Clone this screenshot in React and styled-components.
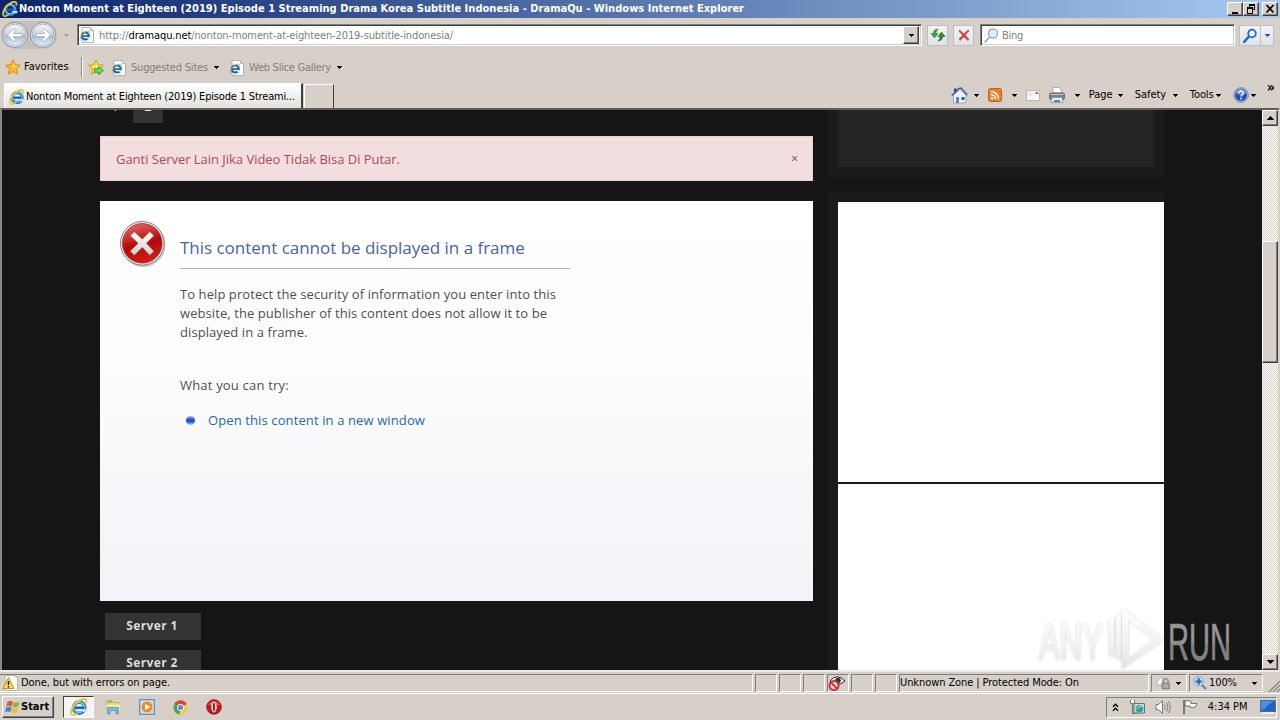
import styled, { createGlobalStyle, css } from "styled-components";

const theme = {
  chrome: "#d6d0c8",
  page: "#151515",
  panel: "#1b1b1b",
  ui: `"DejaVu Sans Condensed", Tahoma, sans-serif`,
  content: `"Open Sans", "Segoe UI", sans-serif`,
};

/* ---------- icons ---------- */

const IeIcon = ({ size = 16 }) => (
  <svg width={size} height={size} viewBox="0 0 16 16">
    <circle cx="8.2" cy="8.6" r="4.9" fill="none" stroke="#1c7ad0" strokeWidth="3.2" />
    <circle cx="8.2" cy="8.3" r="4.6" fill="none" stroke="#6fd0fa" strokeWidth="1.3" />
    <path d="M4 7.5h8.5v2.3H4z" fill="#1765b8" />
    <path d="M9.5 10h6v2.2h-4.2z" fill="#d6ddd8" />
    <path d="M2.1 15C-.9 12.4 3.3 4.7 9 1.9c3.6-1.9 6.5-1.2 5.2 2.5" fill="none" stroke="#f2c22a" strokeWidth="1.8" />
    <path d="M2.1 15c1.2.6 3-.2 4.5-1.4" fill="none" stroke="#f2c22a" strokeWidth="1.4" />
  </svg>
);

const IePageIcon = () => (
  <svg width="16" height="16" viewBox="0 0 16 16">
    <path d="M3 .5h8.5l3 3v12H3z" fill="#fff" stroke="#a9b4c4" />
    <path d="M11.5.5v3h3" fill="#e5edf5" stroke="#a9b4c4" />
    <circle cx="6.3" cy="9" r="3.5" fill="none" stroke="#1668b5" strokeWidth="2.2" />
    <path d="M3.5 8.2h6v1.7h-6z" fill="#1668b5" />
    <path d="M7.5 10.2h4v1.6H8.3z" fill="#fff" />
    <path d="M1.3 13.5C.2 11 4 5.6 7.8 4.3c2.2-.8 3.2 0 2.6 1.5" fill="none" stroke="#dcae2b" />
  </svg>
);

const NavArrow = ({ flip }) => (
  <svg width="28" height="28" viewBox="0 0 28 28">
    <defs>
      <linearGradient id="orb" x1="0" y1="0" x2="0" y2="1">
        <stop offset="0" stopColor="#f4f7fa" />
        <stop offset=".45" stopColor="#cfd8e4" />
        <stop offset=".55" stopColor="#a9bdd3" />
        <stop offset="1" stopColor="#e4f3fb" />
      </linearGradient>
    </defs>
    <circle cx="14" cy="14" r="12.5" fill="#eef1f4" stroke="#8e939b" />
    <circle cx="14" cy="14" r="10.8" fill="url(#orb)" stroke="#9fabba" strokeWidth=".8" />
    <path
      d="M6.500 14l6.500-6.500 2 2-3 3h9v3.200h-9l3 3-2 2z"
      fill="#fff"
      stroke="#8fa0b5"
      strokeWidth=".7"
      transform={flip ? "matrix(-1 0 0 1 28 0)" : undefined}
    />
  </svg>
);

const STAR = "M8 .8l2.200 4.900 5.200.6-3.900 3.600 1.100 5.200L8 12.500l-4.600 2.600 1.100-5.200L.6 6.300l5.200-.6z";

const StarIcon = ({ add }) => (
  <svg width="16" height="16" viewBox="0 0 16 16">
    <path d={STAR} fill={add ? "#fbe14a" : "#fdb822"} stroke={add ? "#c9941d" : "#d98412"} strokeWidth=".9" />
    <path d="M8 2.5l1.5 4.2 3.5.4-5 2z" fill="#ffe892" />
    {add && <path d="M6.500 9.800h4V7.500l5 4-5 4v-2.300h-4z" fill="#7ddc4c" stroke="#21962c" strokeWidth=".9" />}
  </svg>
);

const Triangle = ({ color = "#000" }) => (
  <svg width="6" height="3" viewBox="0 0 6 3" shapeRendering="crispEdges">
    <path d="M0 0h6L3 3z" fill={color} />
  </svg>
);

const RefreshIcon = () => (
  <svg width="16" height="14" viewBox="0 0 16 14">
    <path d="M1 5.5L4.5 10 8 5.5H5.900Q6 2.500 8 1 3.400 1.300 3.200 5.500z" fill="#43a53a" stroke="#237c27" strokeWidth=".6" />
    <path d="M15 8.500L11.500 4 8 8.500h2.100Q10 11.500 8 13q4.600-.3 4.800-4.500z" fill="#348b31" stroke="#1c6a22" strokeWidth=".6" />
  </svg>
);

const StopIcon = () => (
  <svg width="12" height="12" viewBox="0 0 12 12">
    <path d="M1.500 1Q5 4 6 5.200 8 2.500 10.500 1L11 2Q8.500 4 7.200 6.200L11 10.500 9.600 11.300 6 7.800 2.200 11.300 1 10 4.800 6.200 1 2.200z" fill="#d74343" stroke="#b02e2e" strokeWidth=".5" />
  </svg>
);

const Magnifier = ({ color, light }) => (
  <svg width="15" height="15" viewBox="0 0 15 15">
    <path d="M1 14l5-5.500" stroke={color} strokeWidth={light ? 1.6 : 2.6} strokeLinecap="round" />
    <circle cx="9" cy="5.5" r={light ? 4.6 : 3.8} fill={light ? "#dcebf6" : "#eaf2fc"} stroke={color} strokeWidth={light ? 1.2 : 1.8} />
  </svg>
);

const HomeIcon = () => (
  <svg width="17" height="17" viewBox="0 0 17 17">
    <path d="M2.500 8v7.500l6 1L15 15V8L9 2.500z" fill="#eef3f8" stroke="#8a9cb4" strokeWidth=".8" />
    <path d="M3 1.500h2.500V4L3 6z" fill="#2d3f9b" />
    <path d="M.8 8.500L8 1.500l2-.5 6.300 7" fill="none" stroke="#4058a8" strokeWidth="1.4" />
    <path d="M5 10h3v6H5z" fill="#5d87b8" />
    <path d="M10.500 10h3v3h-3z" fill="#1c5f9e" />
  </svg>
);

const RssIcon = () => (
  <svg width="14" height="14" viewBox="0 0 14 14">
    <rect x=".5" y=".5" width="13" height="13" rx="2" fill="#ee7e28" stroke="#c85a18" />
    <circle cx="4" cy="10.2" r="1.3" fill="#fff" />
    <path d="M2.800 6.500c2.700 0 4.700 2 4.700 4.800M2.800 3.400c4.500 0 7.800 3.400 7.800 7.900" fill="none" stroke="#fff" strokeWidth="1.5" />
  </svg>
);

const MailIcon = () => (
  <svg width="14" height="11" viewBox="0 0 14 11">
    <rect x=".5" y=".5" width="13" height="10" fill="#f7f7f8" stroke="#b9b6b6" />
    <path d="M2 3h5M2 5h4" stroke="#d3d6dc" />
    <path d="M9.500 2h2.500v2H9.500z" fill="#d84a4a" />
  </svg>
);

const PrinterIcon = () => (
  <svg width="16" height="16" viewBox="0 0 16 16">
    <path d="M4 6V.5h6L12.500 3v3z" fill="#fff" stroke="#9aa1aa" strokeWidth=".8" />
    <rect x=".5" y="6" width="15" height="6.5" rx="1.5" fill="#7d8085" stroke="#5c5f64" strokeWidth=".8" />
    <path d="M1.500 7.500h13" stroke="#c5c8cc" />
    <path d="M3 10.500h10l.8 5H2.200z" fill="#e4eef7" stroke="#8b929b" strokeWidth=".8" />
    <path d="M5 13h6v2H5z" fill="#3e8fc7" />
  </svg>
);

const HelpIcon = () => (
  <svg width="16" height="16" viewBox="0 0 16 16">
    <circle cx="8" cy="8" r="7.4" fill="#a9b9d8" stroke="#7386b0" strokeWidth=".8" />
    <circle cx="8" cy="8" r="6" fill="#2450b4" />
    <path d="M2.500 6.500a5.500 5 0 0 1 11 0q-5.500 2.500-11 0z" fill="#5f86d8" />
    <path d="M5.800 6.200C5.800 3.200 10.300 3.300 10.300 6c0 1.700-2.200 1.700-2.200 3.500M8.100 10.800v1.700" fill="none" stroke="#fff" strokeWidth="1.5" />
  </svg>
);

const ErrorBadge = () => (
  <svg width="48" height="48" viewBox="0 0 48 48">
    <defs>
      <linearGradient id="red" x1="0" y1="0" x2=".3" y2="1">
        <stop offset="0" stopColor="#e27a74" />
        <stop offset=".45" stopColor="#c8211f" />
        <stop offset=".6" stopColor="#b50808" />
        <stop offset="1" stopColor="#d11a14" />
      </linearGradient>
      <linearGradient id="cross" x1="0" y1="0" x2="0" y2="1">
        <stop offset="0" stopColor="#fff" />
        <stop offset="1" stopColor="#cfcfcf" />
      </linearGradient>
    </defs>
    <circle cx="23.300" cy="23.800" r="22.300" fill="#b8c0c0" opacity=".8" />
    <circle cx="22.300" cy="22.300" r="21.800" fill="#f7f3f2" stroke="#8b7676" />
    <circle cx="22.300" cy="22.300" r="19.800" fill="url(#red)" stroke="#9c2824" strokeWidth=".8" />
    <path
      d="M14.300 10.500l8 7.600 7.500-7.600 4.300 4.200-7.600 7.600 7.600 8-4.300 4.200-7.500-7.900-8 7.900-4.300-4.200 8-8-8-7.600z"
      fill="url(#cross)"
      stroke="#a32320"
      strokeWidth=".6"
    />
  </svg>
);

const WarningIcon = () => (
  <svg width="16" height="16" viewBox="0 0 16 16">
    <path d="M3 .5h9l3.500 3v12H3z" fill="#fff" stroke="#b8b4ac" />
    <path d="M6.500 2.500L12 13.500H1z" fill="#ffe32e" stroke="#b59a13" strokeLinejoin="round" />
    <path d="M6.500 6v4M6.500 11v1.500" stroke="#111" strokeWidth="1.5" />
  </svg>
);

const PrivacyIcon = () => (
  <svg width="18" height="16" viewBox="0 0 18 16">
    <path d="M2 6Q9-2.500 17 6q-8 7-15 0z" fill="#fff" stroke="#222" />
    <circle cx="10" cy="5.500" r="2.800" fill="#333" />
    <circle cx="6" cy="10.500" r="4.500" fill="#fbe3e1" stroke="#cf3030" strokeWidth="2" />
    <path d="M3 7.500l6 6" stroke="#cf3030" strokeWidth="2" />
  </svg>
);

const ZoneLockIcon = () => (
  <svg width="16" height="14" viewBox="0 0 16 14">
    <path d="M1 9Q3 2 8 1l-1 8z" fill="#f4f4f4" stroke="#aaa" strokeWidth=".8" />
    <path d="M8.500 7V5a2.300 2.300 0 0 1 4.600 0v2" fill="none" stroke="#8a8a8a" strokeWidth="1.3" />
    <rect x="7" y="7" width="7.500" height="6" fill="#8f8f8f" stroke="#747474" strokeWidth=".6" />
    <path d="M8 9h5.500M8 11h5.500" stroke="#ddd" strokeWidth=".8" />
  </svg>
);

const ZoomIcon = () => (
  <svg width="14" height="14" viewBox="0 0 14 14">
    <path d="M8.500 8.500l4 4" stroke="#7b7f86" strokeWidth="2" strokeLinecap="round" />
    <circle cx="5.700" cy="5.500" r="4.700" fill="#cfe4f8" stroke="#6fa6dc" />
    <path d="M5.700 2.300v6.400M2.500 5.500h6.400" stroke="#1b60c0" strokeWidth="2" />
  </svg>
);

const StartFlag = () => (
  <svg width="15" height="14" viewBox="0 0 15 14">
    <path d="M2.500 1.800Q5 .2 8 1.500L6.800 6.300Q4 5.200 1.300 6.600z" fill="#e4572b" />
    <path d="M8.800 1.900q3 1.300 5.700-.2L13.200 6.400q-2.800 1.400-5.600.2z" fill="#7dbb42" />
    <path d="M1.100 7.500Q4 6.100 6.600 7.200l-1.300 4.900Q2.800 11 0 12.400z" fill="#3f86d6" />
    <path d="M7.400 7.600q2.800 1.100 5.600-.2l-1.300 4.900q-2.800 1.400-5.600.1z" fill="#f6bd2b" />
  </svg>
);

const FolderIcon = () => (
  <svg width="16" height="16" viewBox="0 0 16 16">
    <path d="M1.500 2h5l1 1.500H14V12H1.500z" fill="#f1d676" stroke="#c9a646" strokeWidth=".8" />
    <path d="M3 1h4v3H3z" fill="#8bc46a" />
    <path d="M1.500 5.500H15v7H1.500z" fill="#f9e9a6" />
    <path d="M2.500 8.500h11V15h-2.600v-3.500H5.200V15H2.500z" fill="#77bde4" stroke="#4290c0" strokeWidth=".7" />
  </svg>
);

const MediaIcon = () => (
  <svg width="16" height="16" viewBox="0 0 16 16">
    <rect x=".6" y=".6" width="14.8" height="14.8" fill="#c4dcf1" stroke="#5a93cb" strokeWidth="1.2" />
    <circle cx="8" cy="8" r="5.800" fill="#f2891c" stroke="#fbd39c" strokeWidth=".8" />
    <path d="M6 4.800L11.500 8 6 11.200z" fill="#fff" />
  </svg>
);

const ChromeIcon = () => (
  <svg width="15" height="15" viewBox="0 0 15 15">
    <circle cx="7.500" cy="7.500" r="7" fill="#f5cd3c" />
    <path d="M7.500 7.500L1.400 4A7 7 0 0 1 13.700 4z" fill="#dc4437" />
    <path d="M7.500 7.500L1.400 4a7 7 0 0 0 5.100 10.400z" fill="#3fa757" />
    <circle cx="7.500" cy="7.500" r="3.400" fill="#f4f4f4" />
    <circle cx="7.500" cy="7.500" r="2.500" fill="#4a8af0" />
  </svg>
);

const OperaIcon = () => (
  <svg width="16" height="16" viewBox="0 0 16 16">
    <circle cx="8" cy="8" r="7.300" fill="#c31a1f" stroke="#8c1216" strokeWidth=".8" />
    <path d="M2.200 6a6 5 0 0 1 11.600 0z" fill="#de5654" />
    <ellipse cx="8" cy="8" rx="2.700" ry="5.400" fill="#f7eeee" />
    <ellipse cx="8" cy="8" rx="1.100" ry="4.400" fill="#b01519" />
  </svg>
);

const NetworkIcon = () => (
  <svg width="16" height="16" viewBox="0 0 16 16">
    <path d="M5 4.500h10.500V14H5z" fill="#c3dcdc" stroke="#67777c" />
    <circle cx="10.500" cy="9.800" r="3.800" fill="#3aa39c" />
    <path d="M7.500 10q3-4 6-2.500" fill="none" stroke="#b8e6dc" />
    <path d="M1.500 1v3.500h4V1" fill="#fff" stroke="#777" />
    <path d="M3.500 5v9.500h5" fill="none" stroke="#777" strokeWidth="1.2" />
  </svg>
);

const SpeakerIcon = () => (
  <svg width="16" height="16" viewBox="0 0 16 16">
    <path d="M1 5.500h2.500L7.500 1.500v13l-4-4H1z" fill="#f8f8f8" stroke="#77787a" />
    <path d="M9.500 5.500q1.500 2.500 0 5M11.500 3.500q3 4.500 0 9M13.500 2q3.500 6 0 12" fill="none" stroke="#808285" />
  </svg>
);

const FlagIcon = () => (
  <svg width="16" height="16" viewBox="0 0 16 16">
    <path d="M2 1v14.500" stroke="#707275" strokeWidth="1.8" />
    <path d="M3 2q3.500-1 6 .5v2h6l-1.500 3.300q-3 1.700-5.500.2V7H3z" fill="#fafafa" stroke="#707275" />
  </svg>
);

const DesktopIcon = () => (
  <svg width="16" height="14" viewBox="0 0 16 14">
    <rect x=".5" y=".5" width="15" height="11" fill="#2163c4" stroke="#4c6a98" />
    <path d="M1 1h14Q9 3 6 7T1 10z" fill="#4a8fe2" />
    <path d="M2 13h12" stroke="#f6f6f6" strokeWidth="1.5" />
  </svg>
);

const Watermark = () => (
  <WatermarkStyled width="214" height="70" viewBox="0 0 214 70">
    <defs>
      <filter id="halo" x="-10%" y="-10%" width="120%" height="120%">
        <feDropShadow dx="0" dy="0" stdDeviation="1.800" floodColor="#000" floodOpacity=".2" />
      </filter>
      <linearGradient id="fade" x1="0" y1="0" x2="0" y2="1">
        <stop offset="0" stopColor="#fff" stopOpacity=".95" />
        <stop offset=".5" stopColor="#f3f3f3" stopOpacity=".95" />
        <stop offset="1" stopColor="#e4e4e4" stopOpacity=".95" />
      </linearGradient>
      <linearGradient id="run" x1="0" y1="0" x2="0" y2="1">
        <stop offset=".5" stopColor="#979797" />
        <stop offset=".55" stopColor="#808080" />
      </linearGradient>
    </defs>
    <g filter="url(#halo)" fill="url(#fade)">
      <text x="4" y="54" fontSize="52" textLength="64" lengthAdjust="spacingAndGlyphs">ANY</text>
      <path
        d="M74 15l5-2v38l-5-2zM81 10l5-2v46l-5-2zM87 3L127 32V36L87 63zM93 14V53L119 34z"
        fillRule="evenodd"
      />
    </g>
    <text x="133" y="54" fontSize="52" textLength="63" lengthAdjust="spacingAndGlyphs" fill="url(#run)" stroke="#8a8a8a" strokeWidth=".7">RUN</text>
  </WatermarkStyled>
);

/* ---------- window ---------- */

const WINDOW_TITLE =
  "Nonton Moment at Eighteen (2019) Episode 1 Streaming Drama Korea Subtitle Indonesia - DramaQu - Windows Internet Explorer";
const MENUS = [
  { label: "Page", width: 46 },
  { label: "Safety", width: 55 },
  { label: "Tools", width: 43 },
];
const SERVERS = ["Server 1", "Server 2"];

function TitleBar() {
  return (
    <TitleBarStyled>
      <IeIcon />
      <Title>{WINDOW_TITLE}</Title>
      <WindowButton>
        <svg width="12" height="10" shapeRendering="crispEdges"><path d="M3 8h6v2H3z" /></svg>
      </WindowButton>
      <WindowButton>
        <svg width="12" height="10" shapeRendering="crispEdges">
          <path d="M4 0h6v2H4zM9 2h1v4H8V5h1zM4 2h1v1H4zM2 3h6v2H2zM2 5h1v4h5v1H2zM7 5h1v5H7z" />
        </svg>
      </WindowButton>
      <WindowButton $gap>
        <svg width="12" height="10"><path d="M2.500 1l7 7.500M9.500 1l-7 7.500" stroke="#000" strokeWidth="1.7" /></svg>
      </WindowButton>
    </TitleBarStyled>
  );
}

function NavBar() {
  return (
    <NavBarStyled>
      <Orbs>
        <NavArrow />
        <NavArrow flip />
      </Orbs>
      <HistoryArrow><Triangle color="#aaa59e" /></HistoryArrow>
      <AddressBox>
        <IePageIcon />
        <Url>http://<b>dramaqu.net</b>/nonton-moment-at-eighteen-2019-subtitle-indonesia/</Url>
        <ComboButton><Triangle /></ComboButton>
      </AddressBox>
      <ToolButton><RefreshIcon /></ToolButton>
      <ToolButton><StopIcon /></ToolButton>
      <SearchBox>
        <Magnifier color="#8fa3b8" light />
        <Muted $spacing={-0.3}>Bing</Muted>
      </SearchBox>
      <SearchButton>
        <span><Magnifier color="#2864cf" /></span>
        <span><Triangle color="#1d56b8" /></span>
      </SearchButton>
    </NavBarStyled>
  );
}

function FavoritesBar() {
  return (
    <FavoritesBarStyled>
      <StarIcon />
      <FavoritesLabel>Favorites</FavoritesLabel>
      <StarIcon add />
      <FavoriteLink $width={118}>
        <IePageIcon />
        <Muted $spacing={-0.2}>Suggested Sites</Muted>
        <Triangle />
      </FavoriteLink>
      <FavoriteLink $width={123}>
        <IePageIcon />
        <Muted $spacing={-0.26}>Web Slice Gallery</Muted>
        <Triangle />
      </FavoriteLink>
    </FavoritesBarStyled>
  );
}

function CommandBar() {
  return (
    <CommandBarStyled>
      <Command $width={37}><HomeIcon /><Triangle /></Command>
      <Command $width={38}><RssIcon /><Triangle /></Command>
      <Command $width={23} $pad={0}><MailIcon /></Command>
      <Command $width={40}><PrinterIcon /><Triangle /></Command>
      {MENUS.map(({ label, width }) => (
        <Command key={label} $width={width} $pad={12}>
          {label}
          <Triangle />
        </Command>
      ))}
      <Command $width={34} $pad={11}><HelpIcon /><Triangle /></Command>
      <More>»</More>
    </CommandBarStyled>
  );
}

function Page() {
  return (
    <Viewport>
      <MainColumn>
        <Pager>
          <PageNumber>1</PageNumber>
          <PageNumber $current>2</PageNumber>
        </Pager>
        <Alert>
          Ganti Server Lain Jika Video Tidak Bisa Di Putar.
          <Close>×</Close>
        </Alert>
        <Frame>
          <ErrorBadge />
          <FrameBody>
            <Heading>This content cannot be displayed in a frame</Heading>
            <Paragraph>
              To help protect the security of information you enter into this<br />
              website, the publisher of this content does not allow it to be<br />
              displayed in a frame.
            </Paragraph>
            <Try>What you can try:</Try>
            <OpenLink>Open this content in a new window</OpenLink>
          </FrameBody>
        </Frame>
        <Servers>
          {SERVERS.map((name) => (
            <ServerButton key={name}>{name}</ServerButton>
          ))}
        </Servers>
      </MainColumn>
      <Sidebar>
        <Widget><WidgetInner /></Widget>
        <AdPanel><Ad /><Ad /></AdPanel>
      </Sidebar>
      <ScrollBar>
        <ScrollButton><svg width="7" height="4" shapeRendering="crispEdges"><path d="M0 4h7L3.500 0z" /></svg></ScrollButton>
        <ScrollThumb />
        <ScrollButton><svg width="7" height="4" shapeRendering="crispEdges"><path d="M0 0h7L3.500 4z" /></svg></ScrollButton>
      </ScrollBar>
    </Viewport>
  );
}

function StatusBar() {
  return (
    <StatusBarStyled>
      <StatusCell $first><WarningIcon />Done, but with errors on page.</StatusCell>
      <StatusCell />
      <StatusCell />
      <StatusCell />
      <StatusCell><PrivacyIcon /></StatusCell>
      <StatusCell />
      <StatusCell />
      <StatusCell>Unknown Zone | Protected Mode: On</StatusCell>
      <StatusCell $icons><ZoneLockIcon /><Triangle /></StatusCell>
      <StatusCell $icons><ZoomIcon /><Percent>100%</Percent><Triangle /></StatusCell>
      <Grip width="12" height="12" viewBox="0 0 12 12">
        <path d="M12 1L1 12M12 5L5 12M12 9l-3 3" stroke="#8d8982" strokeWidth="1.3" />
      </Grip>
    </StatusBarStyled>
  );
}

function TaskBar() {
  return (
    <TaskBarStyled>
      <StartButton><StartFlag />Start</StartButton>
      <ActiveTask><IeIcon size={18} /></ActiveTask>
      <QuickLaunch>
        <FolderIcon />
        <MediaIcon />
        <ChromeIcon />
        <OperaIcon />
      </QuickLaunch>
      <Tray>
        <svg width="7" height="9" viewBox="0 0 7 9"><path d="M1 3.800l2.500-2.500L6 3.800M1 7.800l2.500-2.500L6 7.800" fill="none" stroke="#000" strokeWidth="1.4" /></svg>
        <NetworkIcon />
        <SpeakerIcon />
        <FlagIcon />
        <span>4:34 PM</span>
        <DesktopIcon />
      </Tray>
    </TaskBarStyled>
  );
}

export default function App() {
  return (
    <WindowStyled>
      <GlobalStyle />
      <TitleBar />
      <NavBar />
      <FavoritesBar />
      <TabRow>
        <Tab><IeIcon /><span>Nonton Moment at Eighteen (2019) Episode 1 Streami...</span></Tab>
        <NewTab />
        <CommandBar />
      </TabRow>
      <Page />
      <StatusBar />
      <TaskBar />
      <Watermark />
    </WindowStyled>
  );
}

/* ---------- styles ---------- */

const GlobalStyle = createGlobalStyle`
  * { box-sizing: border-box; }
  body { margin: 0; overflow: hidden; }
  svg { display: block; flex: none; }
`;

const raised = css`
  background: ${theme.chrome};
  border: 1px solid;
  border-color: #fff #404040 #404040 #fff;
  box-shadow: inset -1px -1px 0 #808080;
`;

const sunken = css`
  border: 1px solid;
  border-color: #808080 #fff #fff #808080;
`;

const WindowStyled = styled.div`
  position: relative;
  display: flex;
  flex-direction: column;
  width: 1280px;
  height: 720px;
  background: ${theme.chrome};
  font: 11px/14px ${theme.ui};
  color: #000;
  white-space: nowrap;
`;

const TitleBarStyled = styled.header`
  display: flex;
  align-items: center;
  height: 18px;
  flex: none;
  padding: 0 2px;
  background: linear-gradient(90deg, #0a246a, #a6caf0);
`;

const Title = styled.h1`
  flex: 1;
  margin: 0 0 0 1px;
  font-size: 11px;
  line-height: 20px;
  letter-spacing: 0.027px;
  color: #fff;
`;

const WindowButton = styled.div`
  ${raised}
  width: 16px;
  height: 14px;
  padding: 1px;
  ${({ $gap }) => $gap && "margin-left: 3px;"}
`;

const NavBarStyled = styled.nav`
  display: flex;
  align-items: center;
  height: 34px;
  flex: none;
`;

const Orbs = styled.div`
  display: flex;
  margin-left: 1px;
  border-radius: 14px;
  background: #c3c0bf;
`;

const HistoryArrow = styled.div`
  width: 20px;
  padding-left: 6px;
`;

const fieldBox = css`
  display: flex;
  align-items: center;
  height: 22px;
  background: #fff;
  border: 1px solid;
  border-color: #808080 #fff #fff #808080;
  box-shadow: inset 1px 1px 0 #404040, inset -1px -1px 0 #d4d0c8;
`;

const AddressBox = styled.div`
  ${fieldBox}
  width: 845px;
  padding: 0 2px 0 1px;
`;

const Url = styled.span`
  flex: 1;
  margin: 2px 0 0 4px;
  letter-spacing: -0.123px;
  color: #808080;
  b {
    font-weight: 400;
    color: #000;
  }
`;

const ComboButton = styled.div`
  ${raised}
  display: grid;
  place-items: center;
  width: 16px;
  height: 18px;
`;

const softButton = css`
  border: 1px solid #b9bfc9;
  background: linear-gradient(#f1f2f4, #dfe3e8);
`;

const ToolButton = styled.div`
  ${softButton}
  display: grid;
  place-items: center;
  width: 21px;
  height: 21px;
  margin-left: 5px;
`;

const SearchBox = styled.div`
  ${fieldBox}
  width: 255px;
  margin-left: 6px;
  padding-left: 3px;
  gap: 3px;
  span {
    margin-top: 2px;
  }
`;

const Muted = styled.span`
  letter-spacing: ${({ $spacing }) => $spacing}px;
  color: #808080;
`;

const SearchButton = styled.div`
  ${softButton}
  display: grid;
  grid-template-columns: 20px 13px;
  height: 21px;
  margin-left: 4px;
  span {
    display: grid;
    place-items: center;
  }
  span + span {
    border-left: 1px solid #b9bfc9;
  }
`;

const FavoritesBarStyled = styled.div`
  display: flex;
  align-items: center;
  height: 30px;
  flex: none;
  padding: 0 0 1px 5px;
`;

const FavoritesLabel = styled.span`
  width: 62px;
  height: 20px;
  margin-right: 5px;
  padding-left: 3px;
  line-height: 19px;
  border-right: 1px solid #fff;
  box-shadow: -1px 0 0 #8f8b85 inset;
`;

const FavoriteLink = styled.div`
  display: flex;
  align-items: center;
  width: ${({ $width }) => $width}px;
  padding: 2px 0 0 7px;
  span {
    margin: 0 5px 0 4px;
  }
`;

const TabRow = styled.div`
  display: flex;
  height: 26px;
  flex: none;
  padding-left: 4px;
`;

const Tab = styled.div`
  display: flex;
  align-items: center;
  width: 299px;
  margin-top: 1px;
  padding: 1px 0 0 4px;
  border: 1px solid #fff;
  border-right: 2px solid #404040;
  border-bottom: 0;
  background: linear-gradient(#fff, #e4e1dc);
  span {
    margin-left: 1px;
    letter-spacing: -0.175px;
  }
`;

const NewTab = styled.div`
  width: 30px;
  margin: 2px 0 0 1px;
  border: 1px solid #fff;
  border-right: 1px solid #404040;
  border-bottom: 0;
`;

const CommandBarStyled = styled.div`
  display: flex;
  align-items: center;
  margin-left: auto;
  padding-right: 5px;
`;

const Command = styled.div`
  display: flex;
  align-items: center;
  justify-content: space-between;
  width: ${({ $width }) => $width}px;
  height: 24px;
  padding-right: ${({ $pad = 9 }) => $pad}px;
  letter-spacing: -0.1px;
`;

const More = styled.span`
  align-self: flex-start;
  font-size: 14px;
  font-weight: 700;
  line-height: 10px;
`;

const Viewport = styled.main`
  display: flex;
  height: 562px;
  flex: none;
  border-top: 2px solid #5f5e5b;
  border-left: 2px solid #8b8883;
  border-right: 2px solid ${theme.chrome};
  background: ${theme.page};
  overflow: hidden;
`;

const MainColumn = styled.section`
  display: flex;
  flex-direction: column;
  width: 713px;
  margin-left: 98px;
  font: 13px/19px ${theme.content};
`;

/* scrolled almost out of view, only the bottom edge shows */
const Pager = styled.div`
  display: flex;
  align-items: flex-end;
  height: 13px;
  flex: none;
  gap: 3px;
  overflow: hidden;
`;

const PageNumber = styled.span`
  flex: none;
  width: 30px;
  height: 27px;
  padding-bottom: 10px;
  line-height: 20px;
  text-align: center;
  color: #eee;
  ${({ $current }) => $current && "background: #333;"}
`;

const Alert = styled.div`
  display: flex;
  justify-content: space-between;
  flex: none;
  height: 45px;
  margin-top: 13px;
  padding: 0 14px 0 15px;
  line-height: 44px;
  letter-spacing: -0.026px;
  border: 1px solid #ebccd1;
  background: #f2dede;
  color: #b04a50;
`;

const Close = styled.span`
  font-size: 12px;
  color: #7c3c40;
`;

const Frame = styled.article`
  display: flex;
  flex: none;
  height: 400px;
  margin-top: 20px;
  padding: 20px;
  gap: 12px;
  background: linear-gradient(#fff 0%, #fcfcfd 45%, #f2f3f8 100%);
  color: #4f4f4f;
`;

const FrameBody = styled.div`
  width: 390px;
  padding-top: 14px;
`;

const Heading = styled.h2`
  height: 34px;
  margin: 0;
  font-size: 17px;
  font-weight: 400;
  line-height: 26px;
  letter-spacing: -0.02px;
  border-bottom: 1px solid #b6b6b6;
  color: #4465a2;
`;

const Paragraph = styled.p`
  margin: 16px 0 0;
  letter-spacing: 0.078px;
`;

const Try = styled.p`
  margin: 34px 0 16px;
  letter-spacing: 0.19px;
`;

const OpenLink = styled.a`
  display: flex;
  align-items: center;
  padding-left: 6px;
  gap: 13px;
  letter-spacing: 0.114px;
  color: #1a6ca3;
  &::before {
    content: "";
    width: 9px;
    height: 9px;
    border-radius: 50%;
    background: linear-gradient(#a9bdf0, #1a3fbf 45%, #2f6fd8 70%, #9adcf8);
  }
`;

const Servers = styled.div`
  display: flex;
  flex-direction: column;
  gap: 10px;
  padding: 12px 0 0 5px;
`;

const ServerButton = styled.div`
  flex: none;
  width: 96px;
  height: 27px;
  padding-right: 2px;
  font: 700 12px/26px ${theme.content};
  letter-spacing: 0.35px;
  text-align: center;
  background: #333;
  color: #ddd;
`;

const Sidebar = styled.aside`
  width: 336px;
  margin-left: 15px;
`;

const Widget = styled.div`
  height: 67px;
  padding: 0 10px 10px;
  background: ${theme.panel};
`;

const WidgetInner = styled.div`
  height: 57px;
  background: #242424;
`;

const AdPanel = styled.div`
  display: grid;
  grid-template-rows: 280px 280px;
  gap: 2px;
  margin-top: 15px;
  padding: 10px 0 0 10px;
  background: ${theme.panel};
`;

const Ad = styled.div`
  background: #fff;
`;

const ScrollBar = styled.div`
  display: flex;
  flex-direction: column;
  justify-content: space-between;
  width: 16px;
  margin-left: auto;
  background: repeating-conic-gradient(#fff 0 25%, #d6d0c8 0 50%) 0 0 / 2px 2px;
`;

const ScrollButton = styled.div`
  ${raised}
  display: grid;
  place-items: center;
  height: 16px;
`;

const ScrollThumb = styled.div`
  ${raised}
  height: 122px;
  margin: 115px 0 auto;
`;

const StatusBarStyled = styled.footer`
  display: grid;
  grid-template-columns: 753px repeat(6, 22px) 250px 36px 74px 1fr;
  gap: 2px;
  height: 23px;
  flex: none;
  padding: 2px 0 1px;
  border-top: 2px solid #eeebe6;
  overflow: hidden;
`;

const StatusCell = styled.div`
  ${sunken}
  display: flex;
  align-items: center;
  letter-spacing: -0.087px;
  ${({ $first }) => $first && "gap: 3px; border-left: 0; padding-left: 2px;"}
  ${({ $icons }) => $icons && "justify-content: space-between; padding: 0 5px 0 3px;"}
`;

const Percent = styled.span`
  margin: 0 auto 0 2px;
`;

const Grip = styled.svg`
  align-self: end;
  justify-self: end;
`;

const TaskBarStyled = styled.footer`
  display: flex;
  align-items: center;
  flex: 1;
  padding: 0 3px 0 2px;
  border-top: 1px solid #fff;
`;

const StartButton = styled.div`
  ${raised}
  display: flex;
  align-items: center;
  width: 52px;
  height: 22px;
  padding-left: 2px;
  gap: 1px;
  font-weight: 700;
`;

const ActiveTask = styled.div`
  display: grid;
  place-items: center;
  width: 31px;
  height: 22px;
  margin-left: 9px;
  border: 1px solid;
  border-color: #404040 #fff #fff #404040;
  background: #f6f4f2;
`;

const QuickLaunch = styled.div`
  display: flex;
  align-items: center;
  margin-left: 11px;
  gap: 18px;
`;

const Tray = styled.div`
  ${sunken}
  display: grid;
  grid-template-columns: 7px 16px 16px 16px 42px 16px;
  align-items: center;
  justify-content: space-between;
  width: 171px;
  height: 21px;
  margin-left: auto;
  padding: 0 0 0 5px;
`;

const WatermarkStyled = styled.svg`
  position: absolute;
  left: 1035px;
  top: 606px;
  font-family: "Liberation Sans", Arial, sans-serif;
`;
